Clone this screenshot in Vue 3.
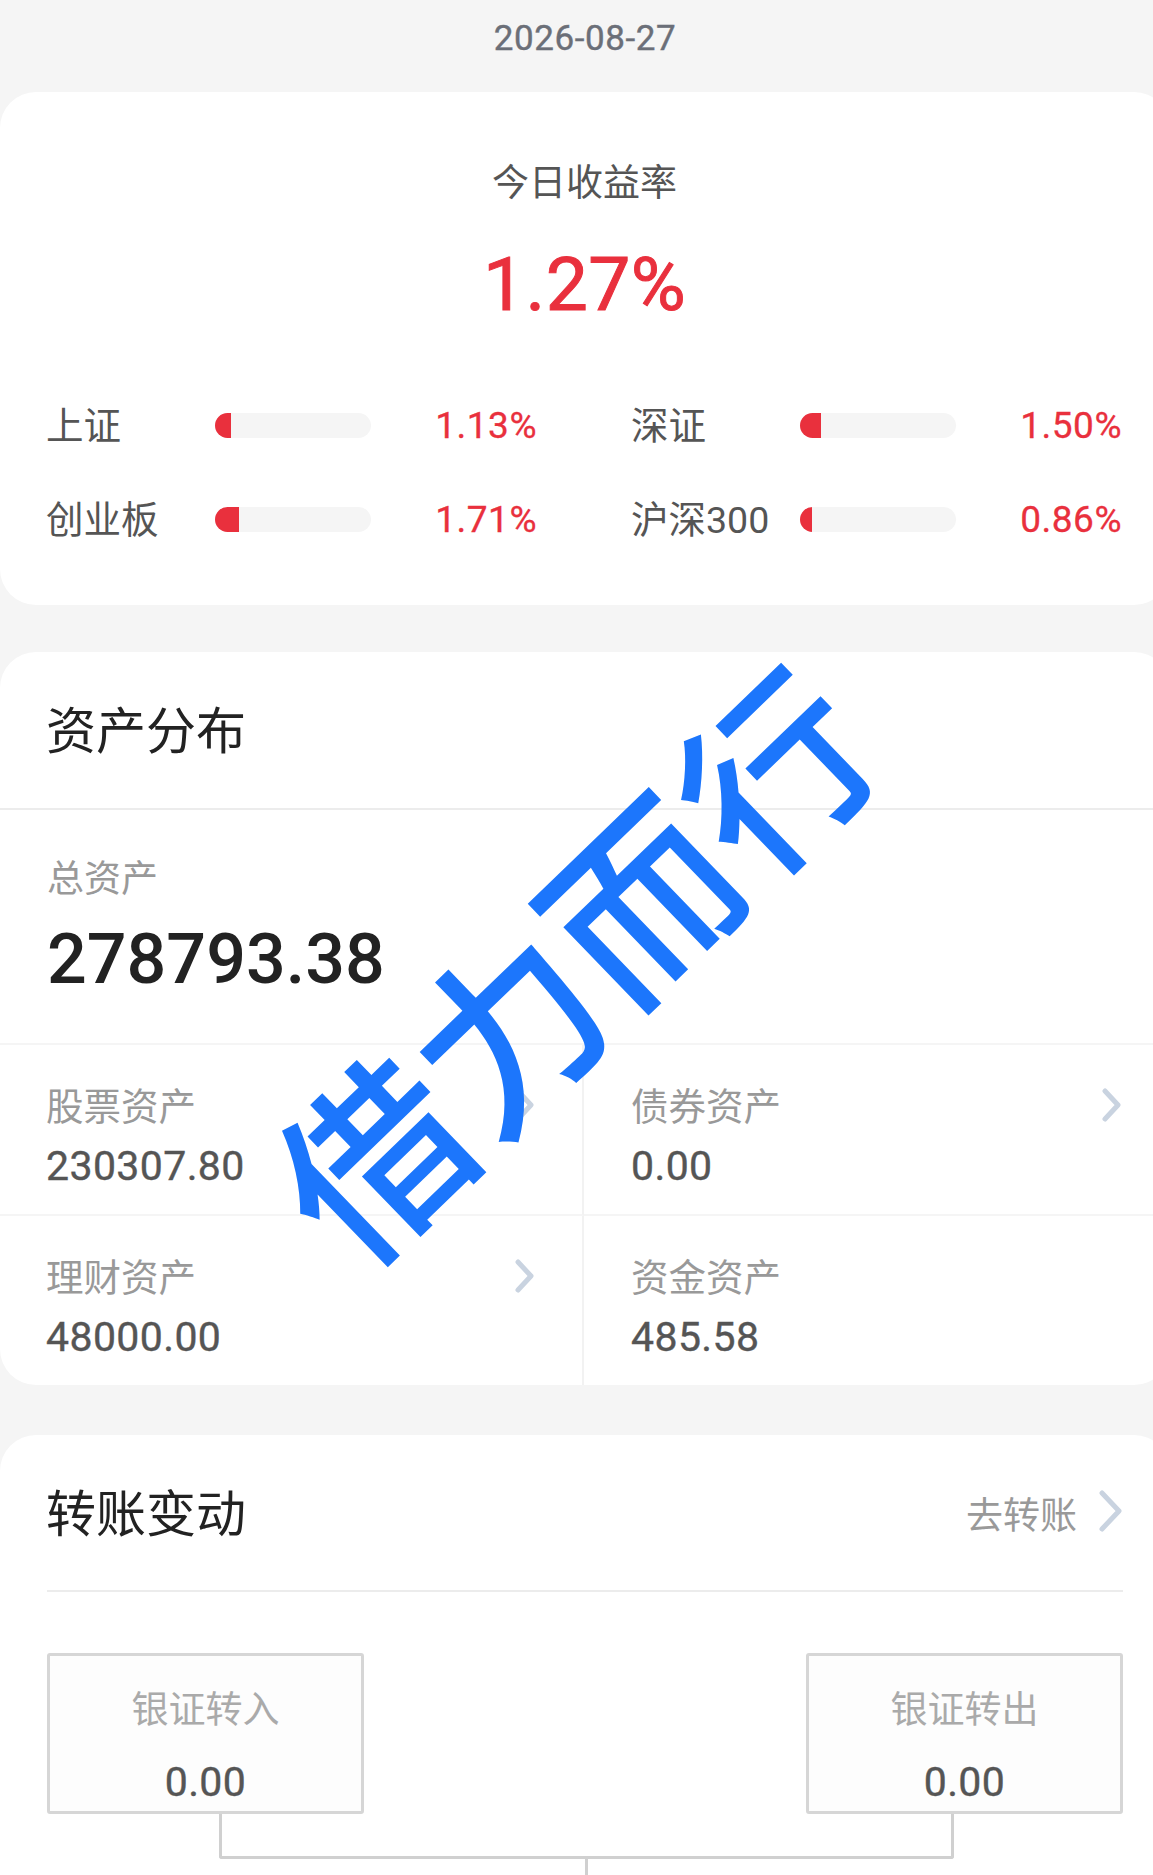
<template>
  <div class="page">
    <div class="content">
      <div class="date">2026-08-27</div>

      <section class="card today">
        <div class="today-title">今日收益率</div>
        <div class="today-value">1.27%</div>
        <div class="index-grid">
          <div v-for="item in indexes" :key="item.name" class="index-row">
            <span class="index-name">{{ item.name }}</span>
            <span class="bar">
              <span class="bar-fill" :style="{ width: item.value * 9 + '%' }"></span>
            </span>
            <span class="index-pct">{{ item.value.toFixed(2) }}%</span>
          </div>
        </div>
      </section>

      <section class="card assets">
        <h2 class="card-head">资产分布</h2>
        <div class="total">
          <div class="total-label">总资产</div>
          <div class="total-value">278793.38</div>
        </div>
        <div class="asset-grid">
          <div v-for="a in assets" :key="a.name" class="asset-cell">
            <div class="asset-top">
              <span class="asset-label">{{ a.name }}</span>
              <svg v-if="a.link" class="chevron" viewBox="0 0 20 34" width="20" height="34">
                <path d="M3 3 L16 17 L3 31" />
              </svg>
            </div>
            <div class="asset-value">{{ a.value }}</div>
          </div>
        </div>
      </section>

      <section class="card transfer">
        <div class="transfer-head">
          <h2>转账变动</h2>
          <div class="transfer-link">
            <span>去转账</span>
            <svg class="chevron big" viewBox="0 0 24 42" width="24" height="42">
              <path d="M3 3 L20 21 L3 39" />
            </svg>
          </div>
        </div>
        <div class="boxes">
          <div class="box">
            <div class="box-label">银证转入</div>
            <div class="box-value">0.00</div>
          </div>
          <div class="box">
            <div class="box-label">银证转出</div>
            <div class="box-value">0.00</div>
          </div>
        </div>
        <div class="connector"></div>
        <div class="stem"></div>
      </section>

      <div class="watermark">借力而行</div>
    </div>
  </div>
</template>

<script setup>
const indexes = [
  { name: '上证', value: 1.13 },
  { name: '深证', value: 1.5 },
  { name: '创业板', value: 1.71 },
  { name: '沪深300', value: 0.86 },
]

const assets = [
  { name: '股票资产', value: '230307.80', link: true },
  { name: '债券资产', value: '0.00', link: true },
  { name: '理财资产', value: '48000.00', link: true },
  { name: '资金资产', value: '485.58', link: false },
]
</script>

<style>
html,
body {
  margin: 0;
  background: #f5f5f5;
}
</style>

<style scoped>
.page {
  width: 1153px;
  height: 1875px;
  overflow: hidden;
  background: #f5f5f5;
  font-family: Roboto, "Noto Sans CJK SC", sans-serif;
}

.content {
  position: relative;
  width: 1170px;
}

.date {
  height: 92px;
  padding-bottom: 16px;
  box-sizing: border-box;
  display: flex;
  align-items: center;
  justify-content: center;
  font-size: 35px;
  letter-spacing: 0.6px;
  -webkit-text-stroke: 0.4px #6b6f78;
  color: #6b6f78;
}

.card {
  background: #fff;
  border-radius: 36px;
}

.today {
  padding: 66px 48px 61px 47px;
  text-align: center;
}

.today-title {
  font-size: 37px;
  line-height: 52px;
  color: #555;
}

.today-value {
  margin-top: 29px;
  font-size: 75px;
  line-height: 90px;
  letter-spacing: 0.4px;
  -webkit-text-stroke: 1px #e9303d;
  color: #e9303d;
}

.index-grid {
  margin-top: 71px;
  display: grid;
  grid-template-columns: 490px 490px;
  justify-content: space-between;
  row-gap: 44px;
}

.index-row {
  height: 50px;
  display: flex;
  align-items: center;
}

.index-name {
  width: 169px;
  margin-left: -1px;
  flex-shrink: 0;
  margin-top: -5px;
  font-size: 37.5px;
  color: #555;
  text-align: left;
  white-space: nowrap;
}

.bar {
  width: 156px;
  height: 25px;
  flex-shrink: 0;
  background: #f5f5f5;
  border-radius: 13px;
  overflow: hidden;
}

.bar-fill {
  display: block;
  height: 100%;
  background: #e9303d;
}

.index-pct {
  flex: 1;
  font-size: 37px;
  letter-spacing: 0.5px;
  -webkit-text-stroke: 0.3px #e9303d;
  color: #e9303d;
  text-align: right;
}

.assets {
  margin-top: 47px;
}

.card-head {
  margin: 0;
  height: 158px;
  padding: 0 0 7px 46px;
  display: flex;
  align-items: center;
  box-sizing: border-box;
  font-size: 50px;
  font-weight: 400;
  color: #222;
  border-bottom: 2px solid #ececec;
}

.total {
  padding: 48px 48px 39px 47px;
  border-bottom: 2px solid #f5f5f5;
}

.total-label {
  font-size: 37px;
  line-height: 44px;
  color: #999;
}

.total-value {
  margin-top: 12px;
  font-size: 70px;
  line-height: 90px;
  font-weight: 500;
  color: #222;
}

.asset-grid {
  display: grid;
  grid-template-columns: 584px 1fr;
}

.asset-cell {
  height: 171px;
  padding: 40px 48px 0 47px;
  box-sizing: border-box;
  border-bottom: 2px solid #f5f5f5;
}

.asset-cell:nth-child(odd) {
  padding: 40px 47px 0 46px;
  border-right: 2px solid #f2f2f2;
}

.asset-cell:nth-child(n + 3) {
  height: 169px;
  border-bottom: none;
}

.asset-top {
  height: 44px;
  display: flex;
  align-items: center;
  justify-content: space-between;
}

.asset-label {
  font-size: 37.5px;
  line-height: 44px;
  color: #999;
}

.asset-value {
  margin-top: 12px;
  font-size: 41px;
  line-height: 50px;
  letter-spacing: 0.4px;
  -webkit-text-stroke: 0.4px #555;
  color: #555;
}

.chevron {
  display: block;
  flex-shrink: 0;
  margin-top: -4px;
}

.chevron path {
  fill: none;
  stroke: #c9d3e0;
  stroke-width: 5;
  stroke-linecap: round;
  stroke-linejoin: round;
}

.transfer {
  margin-top: 50px;
  padding: 0 47px;
  border-radius: 36px 36px 0 0;
}

.transfer-head {
  height: 155px;
  display: flex;
  align-items: center;
  justify-content: space-between;
  border-bottom: 2px solid #ececec;
}

.transfer-head h2 {
  margin: -5px 0 0 -1px;
  font-size: 50px;
  font-weight: 400;
  color: #222;
}

.transfer-link {
  display: flex;
  align-items: center;
  gap: 22px;
  font-size: 37px;
  color: #999;
}

.boxes {
  margin-top: 61px;
  display: flex;
  justify-content: space-between;
}

.box {
  width: 317px;
  height: 161px;
  box-sizing: border-box;
  padding-top: 33px;
  background: #fdfdfd;
  border: 3px solid #d6d6d6;
  border-radius: 3px;
  text-align: center;
}

.box-label {
  font-size: 37px;
  line-height: 44px;
  color: #aaa;
}

.box-value {
  margin-top: 24px;
  font-size: 41px;
  line-height: 50px;
  letter-spacing: 0.4px;
  -webkit-text-stroke: 0.4px #555;
  color: #555;
}

.connector {
  width: 735px;
  height: 45px;
  margin-left: 172px;
  box-sizing: border-box;
  border: 3px solid #d0d0d0;
  border-top: none;
  border-radius: 0 0 3px 3px;
}

.stem {
  width: 3px;
  height: 30px;
  margin-left: 538px;
  background: #d0d0d0;
}

/* 水印盖在内容上面 */
.watermark {
  position: absolute;
  left: 568px;
  top: 959px;
  transform: translate(-50%, -50%) rotate(-44deg);
  font-size: 186px;
  font-weight: 500;
  line-height: 1;
  white-space: nowrap;
  color: #1c76fc;
  font-family: "Noto Sans CJK SC", sans-serif;
}
</style>
